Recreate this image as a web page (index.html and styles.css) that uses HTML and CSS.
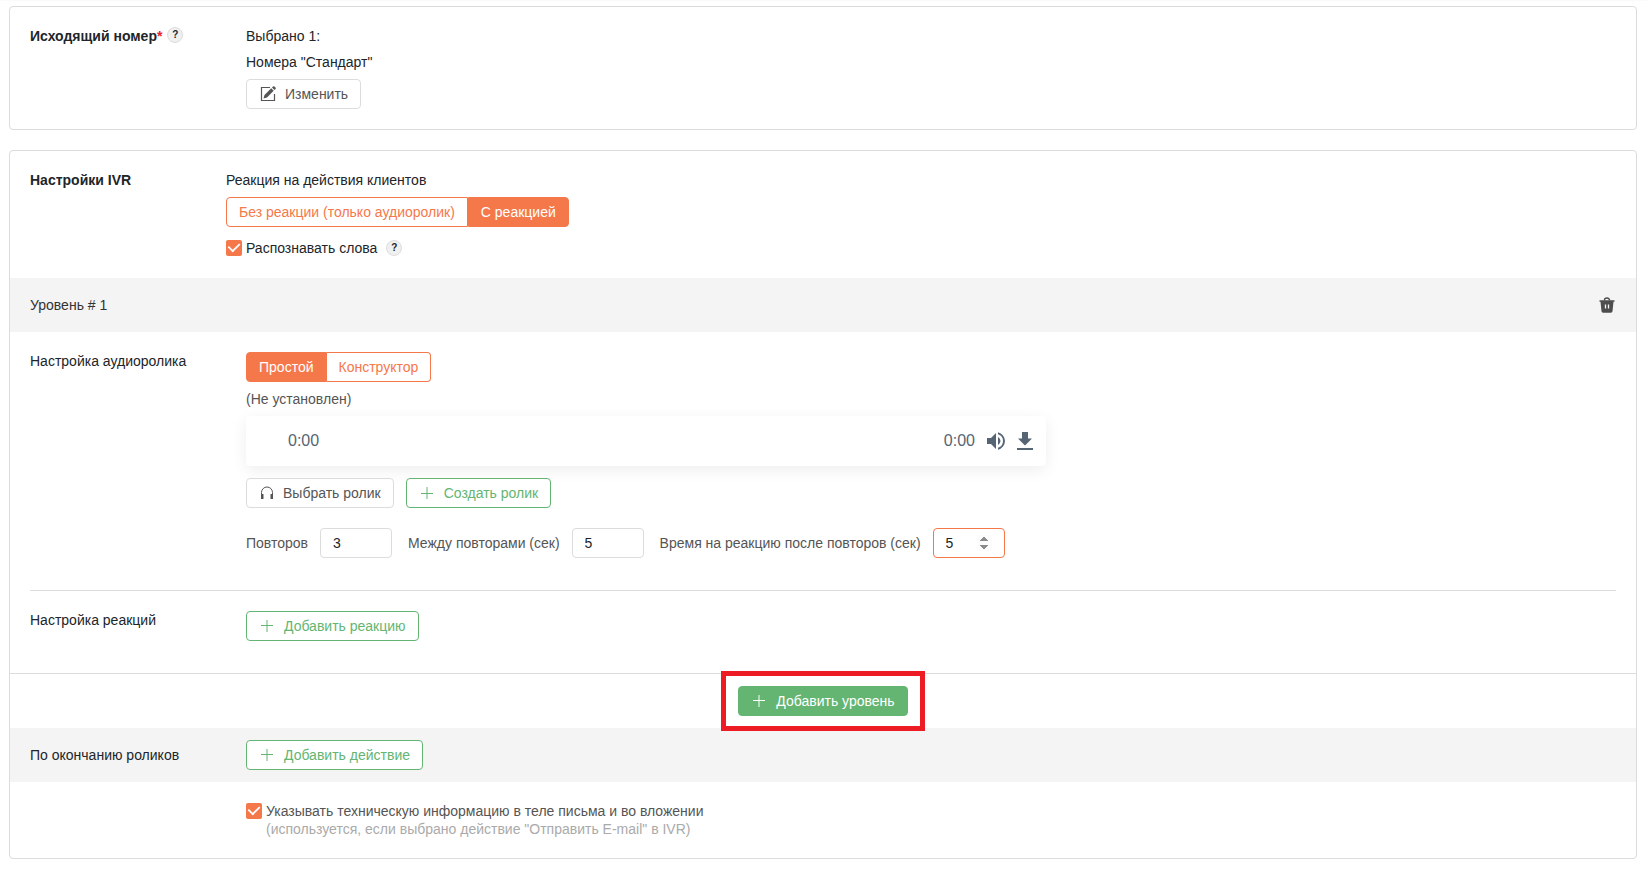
FILE: index.html
```html
<!DOCTYPE html>
<html lang="ru">

<head>
    <meta charset="UTF-8">
    <meta name="viewport" content="width=device-width, initial-scale=1.0">
    <title>Настройки IVR</title>
    <link rel="stylesheet" href="styles.css">
</head>

<body>
    <!-- Исходящий номер -->
    <section class="card">
        <div class="row">
            <div class="row-label bold">Исходящий номер<span class="required">*</span><button type="button" class="help">?</button></div>
            <div class="row-content">
                <div>Выбрано 1:</div>
                <div>Номера "Стандарт"</div>
                <button type="button" class="btn">
                    <svg class="icon-wide" viewBox="0 0 16 16" width="16" height="16">
                        <path d="M10 1.5H1.5v13h13V8" fill="none" stroke="currentColor" stroke-width="1.2"/>
                        <path d="M3.500 12.500l1-3.500 6.700-6.700 2.500 2.500L7 11.500zM12 1.500l1-1a1 1 0 0 1 1.400 0l1.100 1.100a1 1 0 0 1 0 1.400l-1 1z" fill="currentColor"/>
                    </svg>
                    Изменить
                </button>
            </div>
        </div>
    </section>

    <!-- Настройки IVR -->
    <section class="card">
        <div class="row row-wide">
            <div class="row-label bold">Настройки IVR</div>
            <div class="row-content">
                <div>Реакция на действия клиентов</div>
                <div class="btn-group">
                    <button type="button" class="toggle">Без реакции (только аудиоролик)</button>
                    <button type="button" class="toggle active">С реакцией</button>
                </div>
                <div class="check-line">
                    <input type="checkbox" class="checkbox" id="words" checked>
                    <label for="words">Распознавать слова</label>
                    <button type="button" class="help">?</button>
                </div>
            </div>
        </div>

        <div class="bar level-bar">
            <span>Уровень # 1</span>
            <button type="button" class="btn-icon" aria-label="Удалить уровень">
                <svg viewBox="0 0 16 16" width="16" height="16">
                    <path d="M5.500 3.500V3a2.500 2 0 0 1 5 0v.5" fill="none" stroke="currentColor" stroke-width="1.400"/>
                    <path d="M.5 3.200h15v1.500h-1l-1 9.600a1.600 1.600 0 0 1-1.600 1.400H4.100a1.600 1.600 0 0 1-1.600-1.400l-1-9.600h-1z" fill="currentColor"/>
                    <path d="M6.500 7.500v4M9.500 7.500v4" stroke="#f4f4f4" stroke-width="1.300"/>
                </svg>
            </button>
        </div>

        <div class="row">
            <div class="row-label">Настройка аудиоролика</div>
            <div class="row-content muted">
                <div class="btn-group">
                    <button type="button" class="toggle active">Простой</button>
                    <button type="button" class="toggle">Конструктор</button>
                </div>
                <div>(Не установлен)</div>
                <div class="player">
                    <span>0:00</span>
                    <span class="player-total">0:00</span>
                    <button type="button" class="btn-icon" aria-label="Громкость">
                        <svg viewBox="0 0 18 18" width="18" height="18">
                            <path d="M0 6v6h4l5 5V1L4 6zM13.500 9A4.500 4.500 0 0 0 11 4.970v8.050A4.470 4.470 0 0 0 13.500 9zM11 .230v2.060a7 7 0 0 1 0 13.420v2.060A9 9 0 0 0 11 .230z" fill="currentColor"/>
                        </svg>
                    </button>
                    <button type="button" class="btn-icon" aria-label="Скачать">
                        <svg viewBox="0 0 16 18" width="16" height="18">
                            <path d="M15 6.500h-4V0H5v6.500H1l7 7zM0 16v2h16v-2z" fill="currentColor"/>
                        </svg>
                    </button>
                </div>
                <div class="actions">
                    <button type="button" class="btn">
                        <svg class="icon-wide" viewBox="0 0 14 14" width="14" height="14">
                            <path d="M1.500 9V6.500a5.500 5.500 0 0 1 11 0V9" fill="none" stroke="currentColor"/>
                            <path d="M1 8h2.500v5H1zM13 8h-2.500v5H13z" fill="currentColor"/>
                        </svg>
                        Выбрать ролик
                    </button>
                    <button type="button" class="btn btn-green">
                        <svg viewBox="0 0 12 12" width="12" height="12"><path d="M0 6.500h12M6 0v12" stroke="currentColor"/></svg>
                        Создать ролик
                    </button>
                </div>
                <div class="fields">
                    <div class="field">
                        <label for="repeats">Повторов</label>
                        <input type="number" class="number" id="repeats" value="3">
                    </div>
                    <div class="field">
                        <label for="between">Между повторами (сек)</label>
                        <input type="number" class="number" id="between" value="5">
                    </div>
                    <div class="field">
                        <label for="wait">Время на реакцию после повторов (сек)</label>
                        <input type="number" class="number" id="wait" value="5" autofocus>
                    </div>
                </div>
            </div>
        </div>

        <hr class="divider">

        <div class="row row-reactions">
            <div class="row-label">Настройка реакций</div>
            <div class="row-content">
                <button type="button" class="btn btn-green">
                    <svg viewBox="0 0 12 12" width="12" height="12"><path d="M0 5.500h12M6 0v12" stroke="currentColor"/></svg>
                    Добавить реакцию
                </button>
            </div>
        </div>

        <div class="add-level">
            <div class="highlight">
                <button type="button" class="btn btn-green btn-solid">
                    <svg viewBox="0 0 12 12" width="12" height="12"><path d="M0 5.500h12M6 0v12" stroke="currentColor"/></svg>
                    Добавить уровень
                </button>
            </div>
        </div>

        <div class="bar">
            <div class="row-label">По окончанию роликов</div>
            <button type="button" class="btn btn-green">
                <svg viewBox="0 0 12 12" width="12" height="12"><path d="M0 5.500h12M6 0v12" stroke="currentColor"/></svg>
                Добавить действие
            </button>
        </div>

        <div class="row">
            <div class="row-label"></div>
            <div class="check-line check-top">
                <input type="checkbox" class="checkbox" id="techinfo" checked>
                <label for="techinfo" class="muted">Указывать техническую информацию в теле письма и во вложении<span class="hint">(используется, если выбрано действие "Отправить E-mail" в IVR)</span></label>
            </div>
        </div>
    </section>
</body>

</html>
```

FILE: styles.css
```css
* {
    box-sizing: border-box;
}

body {
    margin: 0;
    padding: 5px 10px 10px 9px;
    border-top: 1px solid #fafafa;
    background: #fff;
    color: #212529;
    font-family: "Liberation Sans", Arial, sans-serif;
    font-size: 14px;
    line-height: 18px;
}

button, input {
    font: inherit;
    margin: 0;
}

button {
    cursor: pointer;
}

.card {
    border: 1px solid #dcdcdc;
    border-radius: 4px;
    margin-bottom: 20px;
}

.row {
    display: flex;
    padding: 20px;
}

.row-label {
    flex: 0 0 216px;
}

.row-wide {
    padding-bottom: 21px;
}

.row-wide .row-label {
    flex-basis: 196px;
}

.row-content {
    flex: 1;
    display: flex;
    flex-direction: column;
    align-items: flex-start;
    gap: 8px;
}

.bold {
    font-weight: bold;
}

.muted {
    color: #555;
}

.required {
    color: #e8212b;
}

.help {
    width: 16px;
    height: 16px;
    padding: 0;
    border: 1px solid #ddd;
    border-radius: 50%;
    background: #f0f0f0;
    color: #212529;
    font-size: 10px;
    font-weight: bold;
    line-height: 14px;
    text-align: center;
    vertical-align: top;
    margin-left: 5px;
}

/* Buttons */
.btn {
    display: inline-flex;
    align-items: center;
    height: 30px;
    padding: 0 12px 0 13px;
    gap: 12px;
    border: 1px solid #dcdcdc;
    border-radius: 4px;
    background: #fff;
    color: #555;
    white-space: nowrap;
}

.icon-wide {
    margin-right: -3px;
}

.btn-green {
    padding-left: 14px;
    gap: 11px;
    border-color: #64b572;
    color: #64b572;
}

.btn-solid {
    background: #64b572;
    color: #fff;
}

.btn-icon {
    display: flex;
    padding: 0;
    border: 0;
    background: none;
    color: inherit;
}

.btn-group {
    display: flex;
}

.toggle {
    height: 30px;
    padding: 0 12px;
    border: 1px solid #f5784b;
    background: #fff;
    color: #f5784b;
}

.toggle.active {
    background: #f5784b;
    color: #fff;
}

.toggle:first-child {
    border-radius: 4px 0 0 4px;
}

.toggle:last-child {
    border-radius: 0 4px 4px 0;
    border-left-width: 0;
}

.toggle.active:last-child {
    border-left-width: 1px;
}

/* Checkboxes */
.check-line {
    display: flex;
    align-items: center;
    gap: 4px;
}

.row-wide .check-line {
    margin-top: 4px;
}

.check-top {
    align-items: flex-start;
}

.checkbox {
    appearance: none;
    display: grid;
    place-content: center;
    width: 16px;
    height: 16px;
    border-radius: 2px;
    background: #f5784b;
}

.check-top .checkbox {
    margin-top: 1px;
}

.checkbox:checked::before {
    content: "";
    width: 10px;
    height: 6px;
    margin-bottom: 4px;
    border: solid #fff;
    border-width: 0 0 2px 2px;
    transform: rotate(-45deg) scale(0.9);
}

.hint {
    display: block;
    color: #aaa;
}

/* Grey bars */
.bar {
    display: flex;
    align-items: center;
    height: 54px;
    padding: 0 20px;
    background: #f4f4f4;
}

.level-bar {
    justify-content: space-between;
    color: #333;
}

.level-bar .btn-icon {
    color: #4d4d4d;
    margin-right: 1px;
}

/* Audio player */
.player {
    display: flex;
    align-items: center;
    width: 100%;
    max-width: 800px;
    height: 50px;
    padding: 0 13px 0 42px;
    gap: 12px;
    border-radius: 4px;
    box-shadow: 0 4px 16px rgba(0, 0, 0, 0.07);
    color: #566574;
    font-size: 16px;
}

.player-total {
    margin-left: auto;
}

.actions {
    display: flex;
    gap: 12px;
    margin-top: 4px;
}

.fields {
    display: flex;
    gap: 16px;
    margin: 12px 0;
}

.field {
    display: flex;
    align-items: center;
    gap: 12px;
}

.number {
    width: 72px;
    height: 30px;
    padding: 0 12px;
    border: 1px solid #dcdcdc;
    border-radius: 4px;
    background: #fff;
    color: #212529;
}

.number::-webkit-inner-spin-button {
    opacity: 0;
}

.number:focus {
    outline: 0;
    border-color: #f5784b;
    caret-color: #f5784b;
}

.number:focus::-webkit-inner-spin-button {
    opacity: 1;
}

.divider {
    margin: 0 20px;
    border: 0;
    border-top: 1px solid #dcdcdc;
}

.row-reactions {
    padding-bottom: 32px;
}

.add-level {
    display: flex;
    justify-content: center;
    padding: 12px 0;
    border-top: 1px solid #dcdcdc;
}

.highlight {
    display: flex;
    position: relative;
}

/* Red frame around the button */
.highlight::after {
    content: "";
    position: absolute;
    inset: -15px -17px;
    border: 5px solid #ed1c24;
    pointer-events: none;
}
```
